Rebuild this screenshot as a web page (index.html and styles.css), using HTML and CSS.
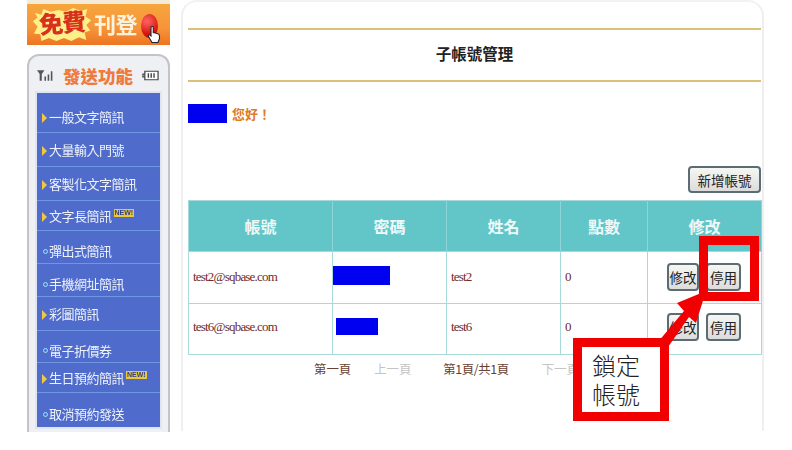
FILE: index.html
```html
<!DOCTYPE html>
<html lang="zh-Hant">
<head>
<meta charset="utf-8">
<title>子帳號管理</title>
<link rel="stylesheet" href="styles.css">
</head>
<body>
<div class="page">
  <aside class="side">
    <div class="banner">
      <svg class="burst" viewBox="0 0 64 40" aria-hidden="true"><polygon fill="#fdf08a" points="3,8 10,10 12,4 20,7 28,5 36,7 44,3 52,6 59,4 57,12 63,16 58,21 62,27 56,29 58,37 50,34 42,38 34,35 26,38 18,35 10,38 9,31 2,30 6,23 1,17 6,13"/></svg>
      <span class="free">免費</span>
      <span class="post">刊登</span>
      <span class="ball"></span>
      <svg class="hand" viewBox="0 0 14 18" aria-hidden="true"><path d="M4 1.500c1-1 2.300-.5 2.300 1V7l4 1c1.500.4 2.200 1 2.200 2.500V13l-1.500 4H5L1.500 11c-.8-1.200.6-2.200 1.600-1.300L4 10.500z" fill="#fff" stroke="#223" stroke-width="1.100"/></svg>
    </div>
    <div class="phone">
      <div class="phone-head">
        <svg class="signal" viewBox="0 0 16 12" aria-hidden="true"><path d="M0 1h7L4.500 4.500V11H2.500V4.500zM7 7h1.500v4H7zM10 5h1.500v6H10zM13 2h1.500v9H13z" fill="#555"/></svg>
        <h2 class="phone-title">發送功能</h2>
        <svg class="battery" viewBox="0 0 18 12" aria-hidden="true"><path d="M3 1.500h14v9H3zM1 4.500h2v3H1z" fill="#fff" stroke="#444" stroke-width="1.300"/><path d="M6 3.500h1.500v5H6zM9 3.500h1.500v5H9zM12 3.500h1.500v5H12z" fill="#444"/></svg>
      </div>
      <ul class="menu">
        <li class="item low"><i class="arrow"></i>一般文字簡訊</li>
        <li class="item"><i class="arrow"></i>大量輸入門號</li>
        <li class="item"><i class="arrow"></i>客製化文字簡訊</li>
        <li class="item"><i class="arrow"></i>文字長簡訊<b class="new">NEW!</b></li>
        <li class="item low"><i class="dot"></i>彈出式簡訊</li>
        <li class="item low"><i class="dot"></i>手機網址簡訊</li>
        <li class="item"><i class="arrow"></i>彩圖簡訊</li>
        <li class="item low"><i class="dot"></i>電子折價券</li>
        <li class="item"><i class="arrow"></i>生日預約簡訊<b class="new">NEW!</b></li>
        <li class="item low"><i class="dot"></i>取消預約發送</li>
      </ul>
    </div>
  </aside>

  <main class="panel">
    <h1 class="title">子帳號管理</h1>
    <p class="greet"><span class="mask mask-name"></span><span class="hello">您好！</span></p>
    <div class="actions"><button class="btn btn-add">新增帳號</button></div>
    <table class="grid">
      <thead>
        <tr><th class="c1">帳號</th><th class="c2">密碼</th><th class="c3">姓名</th><th class="c4">點數</th><th class="c5">修改</th></tr>
      </thead>
      <tbody>
        <tr>
          <td>test2@sqbase.com</td>
          <td class="pw"><span class="mask mask-a"></span></td>
          <td>test2</td>
          <td>0</td>
          <td class="ops"><button class="btn">修改</button><button class="btn">停用</button></td>
        </tr>
        <tr class="row-last">
          <td>test6@sqbase.com</td>
          <td class="pw"><span class="mask mask-b"></span></td>
          <td>test6</td>
          <td>0</td>
          <td class="ops"><button class="btn">修改</button><button class="btn">停用</button></td>
        </tr>
      </tbody>
    </table>
    <nav class="pager">
      <span class="pg-on">第一頁</span>
      <span class="pg-off">上一頁</span>
      <span class="pg-on pg-count">第1頁/共1頁</span>
      <span class="pg-off">下一頁</span>
    </nav>
  </main>
</div>

<svg class="arrow-note" viewBox="0 0 792 450" aria-hidden="true">
  <path d="M658 342L684 311L677 303L706 291L696 323L689 317L668 347z" fill="#f00000"/>
</svg>
<div class="frame"></div>
<div class="note">鎖定<br>帳號</div>
</body>
</html>
```
FILE: styles.css
```css
* { box-sizing: border-box; }
html, body { margin: 0; padding: 0; }
body {
  position: relative;
  width: 792px;
  height: 450px;
  overflow: hidden;
  background: #fff;
  font-family: "Liberation Serif", "Noto Sans CJK TC", serif;
}
.page {
  display: flex;
  gap: 11px;
  padding-left: 27px;
  height: 431px;
}

/* left column */
.side { width: 143px; flex: none; }
.banner {
  position: relative;
  height: 45px;
  border-top: 4px solid #f3ead8;
  background: linear-gradient(#f7a63c 0, #f6943a 60%, #ee7420 100%);
  overflow: hidden;
  filter: blur(.4px);
}
.burst { position: absolute; left: 5px; top: 0; width: 60px; height: 40px; }
.free {
  position: absolute;
  left: 12px;
  top: 3px;
  font: 900 24px/30px "Noto Sans CJK TC", sans-serif;
  letter-spacing: -1px;
  color: #d8301c;
  transform: rotate(-5deg);
}
.post {
  position: absolute;
  left: 67px;
  top: 4px;
  font: 700 22px/30px "Noto Sans CJK TC", sans-serif;
  letter-spacing: -.5px;
  color: #fdf2dc;
}
.ball {
  position: absolute;
  left: 114px;
  top: 10px;
  width: 17px;
  height: 24px;
  border-radius: 50%;
  background: radial-gradient(circle at 35% 30%, #f66, #d81810 60%, #a01008);
}
.hand { position: absolute; left: 120px; top: 21px; width: 14px; height: 19px; }

.phone {
  margin-top: 9px;
  height: 378px;
  padding: 0 8px;
  border: 2px solid #c4c4c8;
  border-bottom: 0;
  border-radius: 12px 12px 0 0;
  background: #eef0f4;
}
.phone-head {
  display: flex;
  align-items: center;
  gap: 9px;
  height: 37px;
  padding-top: 2px;
}
.signal { width: 17px; height: 13px; flex: none; }
.phone-title {
  margin: 0;
  font: 900 17.500px/24px "Noto Sans CJK TC", sans-serif;
  color: #ee7a3c;
  white-space: nowrap;
}
.battery { width: 17px; height: 13px; flex: none; }
.menu {
  display: grid;
  grid-template-rows: 40px 34px 34px 30px 33px 33px 34px 32px 30px 34px;
  width: 123px;
  margin: 0;
  padding: 0;
  list-style: none;
  background: #4f6bcb;
  box-shadow: 0 0 0 2px #dfe6f2;
}
.item {
  display: flex;
  align-items: center;
  padding-left: 5px;
  border-bottom: 1px solid #6f96e2;
  font: 13px/16px "Noto Sans CJK TC", sans-serif;
  letter-spacing: -.5px;
  color: #eef2fa;
  white-space: nowrap;
  filter: blur(.3px);
}
.item:last-child { border-bottom: 0; }
.low { padding-top: 8px; }
.arrow {
  flex: none;
  width: 0;
  height: 0;
  margin-right: 2px;
  margin-top: 3px;
  border-left: 5px solid #f2c83c;
  border-top: 5px solid transparent;
  border-bottom: 5px solid transparent;
}
.dot {
  flex: none;
  width: 5px;
  height: 5px;
  margin-right: 1px;
  margin-left: 1px;
  border: 1px solid #a8dcf4;
  border-radius: 50%;
  background: #3f7ed0;
}
.new {
  margin-left: 2px;
  margin-top: -6px;
  padding: 0 1px;
  font: 700 7px/8px "Liberation Sans", sans-serif;
  letter-spacing: 0;
  color: #34408a;
  background: #e8c83c;
}

/* right panel */
.panel {
  width: 583px;
  flex: none;
  padding: 29px 1px 0 5px;
  border: 2px solid #efefef;
  border-bottom: 0;
  border-radius: 16px 16px 0 0;
  border-top-color: #f2f2f2;
  background: #fff;
}
.title {
  margin: -3px 0 0;
  height: 54px;
  border-top: 2px solid #dcc078;
  border-bottom: 2px solid #dcc078;
  font: 700 15.500px/46px "Noto Sans CJK TC", sans-serif;
  color: #222;
  text-align: center;
}
.greet {
  display: flex;
  align-items: center;
  gap: 5px;
  height: 19px;
  margin: 22px 0 0;
}
.mask { display: block; background: #0000f0; }
.mask-name { width: 39px; height: 19px; }
.hello {
  font: 700 13px/15px "Noto Sans CJK TC", sans-serif;
  color: #e07a28;
}
.actions {
  display: flex;
  justify-content: flex-end;
  margin-top: 43px;
  height: 34px;
  align-items: flex-start;
}
.btn {
  height: 28px;
  padding: 0;
  border: 2px solid #5c6c74;
  border-radius: 4px;
  background: linear-gradient(#f6f6f2, #dcdcdc);
  font: 13.500px/22px "Noto Sans CJK TC", sans-serif;
  color: #222;
}
.btn-add { width: 73px; height: 27px; }
.grid {
  width: 573px;
  table-layout: fixed;
  border-collapse: collapse;
  border: 1px solid #a8dada;
}
.c1 { width: 144px; }
.c2 { width: 114px; }
.c3 { width: 114px; }
.c4 { width: 87px; }
.c5 { width: 114px; }
.grid th {
  height: 51px;
  border-right: 1px solid #8cd6d8;
  background: #62c6c9;
  font: 700 16px/20px "Noto Sans CJK TC", sans-serif;
  color: #eef8f8;
  text-align: center;
}
.grid td {
  height: 52px;
  padding: 0 4px 2px;
  border: 1px solid #a8dada;
  font: 13px/16px "Liberation Serif", serif;
  letter-spacing: -.8px;
  color: #6e2a2a;
}
.grid .row-last td { height: 51px; padding-bottom: 4px; }
.grid td.pw { padding: 0 0 4px; }
.grid .row-last td.pw { padding-bottom: 6px; }
.mask-a { width: 57px; height: 19px; }
.mask-b { width: 42px; height: 17px; margin-left: 3px; }
.ops { white-space: nowrap; }
.grid td.ops { padding: 0 0 2px 19px; }
.grid .row-last td.ops { padding-bottom: 4px; }
.ops .btn { width: 32px; letter-spacing: 0; }
.ops .btn + .btn { width: 35px; margin-left: 7px; }
.pager {
  display: flex;
  padding-left: 126px;
  margin-top: 5px;
  font: 12.400px/18px "Noto Sans CJK TC", sans-serif;
  white-space: nowrap;
}
.pager span { margin-right: 23px; }
.pager span:nth-child(2) { margin-right: 32px; }
.pager span:nth-child(3) { margin-right: 33px; }
.pg-count { letter-spacing: -.4px; }
.pg-on { color: #6a4030; }
.pg-off { color: #c4c4c4; }

/* annotation over the page */
.arrow-note { position: absolute; left: 0; top: 0; width: 792px; height: 450px; }
.frame {
  position: absolute;
  left: 699px;
  top: 236px;
  width: 60px;
  height: 65px;
  border: 9px solid #f00000;
}
.note {
  position: absolute;
  left: 573px;
  top: 338px;
  width: 96px;
  height: 83px;
  padding: 3px 0 0 10px;
  border: 9px solid #f00000;
  background: #fff;
  font: 300 24px/29px "Noto Sans CJK TC", sans-serif;
  color: #222;
}
```
